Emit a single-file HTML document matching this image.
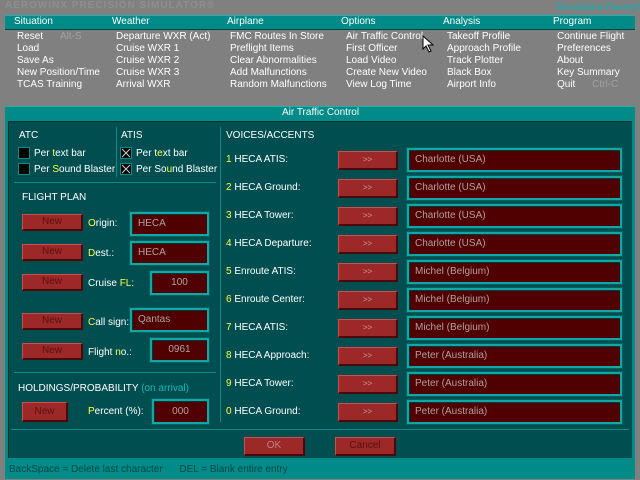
<!DOCTYPE html>
<html><head><style>
*{margin:0;padding:0;box-sizing:border-box}
body{width:640px;height:480px;background:#808080;position:relative;overflow:hidden;font-family:"Liberation Sans",sans-serif;font-size:10px;color:#fff}
.a{position:absolute;white-space:nowrap;line-height:12px}
.y{color:#ffff40}
.btn{position:absolute;background:#9c2828;border-top:1px solid #c85050;border-left:1px solid #c85050;border-bottom:2px solid #4a0808;border-right:2px solid #4a0808;color:#5a1010;text-align:center;font-size:10px}
.fld{position:absolute;background:#500000;border:2px solid #10a8a4;outline:1px solid #006060;box-shadow:inset 1px 1px 0 #003838;color:#b0a0a0;padding-left:6px;font-size:10px;height:24px;line-height:20px}
.chk{position:absolute;width:12px;height:12px;background:#000;border:1px solid #0a8a88}
.ln{position:absolute;background:#0a8a88}
.nb{width:61px;height:17px;line-height:14px}
.rb{left:338px;width:60px;height:19px;line-height:16px;color:#c0a0a0;font-size:8px}
.rf{left:407px;width:215px}
</style></head><body>
<div class="a" style="left:5px;top:0;color:#8e8e8e;font-weight:bold;letter-spacing:1px">AEROWINX PRECISION SIMULATOR®</div>
<div class="a" style="left:556px;top:2px;color:#10b0b0">Simulation Paused</div>
<div style="position:absolute;left:5px;top:15px;width:630px;height:15px;background:#008a88;border-top:1px solid #20b0b0;border-bottom:1px solid #004848"></div>
<div class="a" style="left:14px;top:16px">Situation</div>
<div class="a" style="left:112px;top:16px">Weather</div>
<div class="a" style="left:227px;top:16px">Airplane</div>
<div class="a" style="left:341px;top:16px">Options</div>
<div class="a" style="left:443px;top:16px">Analysis</div>
<div class="a" style="left:553px;top:16px">Program</div>
<div class="a" style="left:17px;top:31px">Reset <span style="color:#a0a0a0;margin-left:14px">Alt-S</span><br>Load<br>Save As<br>New Position/Time<br>TCAS Training</div>
<div class="a" style="left:116px;top:31px">Departure WXR (Act)<br>Cruise WXR 1<br>Cruise WXR 2<br>Cruise WXR 3<br>Arrival WXR</div>
<div class="a" style="left:230px;top:31px">FMC Routes In Store<br>Preflight Items<br>Clear Abnormalities<br>Add Malfunctions<br>Random Malfunctions</div>
<div class="a" style="left:346px;top:31px">Air Traffic Control<br>First Officer<br>Load Video<br>Create New Video<br>View Log Time</div>
<div class="a" style="left:447px;top:31px">Takeoff Profile<br>Approach Profile<br>Track Plotter<br>Black Box<br>Airport Info</div>
<div class="a" style="left:557px;top:31px">Continue Flight<br>Preferences<br>About<br>Key Summary<br>Quit <span style="color:#a0a0a0;margin-left:14px">Ctrl-C</span></div>
<svg style="position:absolute;left:422px;top:35px" width="14" height="18"><path d="M1 1 L1 14 L4 11 L7 17 L9 16 L6 10 L11 10 Z" fill="#fff" stroke="#000"/></svg>

<div style="position:absolute;left:5px;top:106px;width:630px;height:373px;background:#008a88;border-top:1px solid #20b0b0"></div>
<div class="a" style="left:282px;top:107px">Air Traffic Control</div>
<div style="position:absolute;left:8px;top:121px;width:624px;height:337px;background:#004e50;border-top:1px solid #003030;border-left:1px solid #003030"></div>
<div class="a" style="left:9px;top:464px;color:#004848">BackSpace = Delete last character &nbsp;&nbsp;&nbsp;&nbsp; DEL = Blank entire entry</div>

<div class="ln" style="left:116px;top:127px;width:1px;height:50px"></div>
<div class="ln" style="left:220px;top:127px;width:1px;height:295px"></div>
<div class="ln" style="left:14px;top:182px;width:202px;height:1px"></div>
<div class="ln" style="left:14px;top:372px;width:202px;height:1px"></div>
<div class="ln" style="left:11px;top:429px;height:1px;width:618px"></div>

<div class="a" style="left:19px;top:130px">ATC</div>
<div class="a" style="left:121px;top:130px">ATIS</div>
<div class="chk" style="left:18px;top:147px"></div>
<div class="chk" style="left:18px;top:163px"></div>
<div class="a" style="left:34px;top:148px">Per <span class="y">t</span>ext bar</div>
<div class="a" style="left:34px;top:164px">Per <span class="y">S</span>ound Blaster</div>
<svg style="position:absolute;left:120px;top:147px" width="12" height="12"><rect x="0.5" y="0.5" width="11" height="11" fill="#000" stroke="#0a8a88"/><path d="M2 2L10 10M10 2L2 10" stroke="#ccc"/></svg>
<svg style="position:absolute;left:120px;top:163px" width="12" height="12"><rect x="0.5" y="0.5" width="11" height="11" fill="#000" stroke="#0a8a88"/><path d="M2 2L10 10M10 2L2 10" stroke="#ccc"/></svg>
<div class="a" style="left:136px;top:148px">Per t<span class="y">e</span>xt bar</div>
<div class="a" style="left:136px;top:164px">Per So<span class="y">u</span>nd Blaster</div>

<div class="a" style="left:22px;top:192px">FLIGHT PLAN</div>
<div class="btn nb" style="left:22px;top:214px">New</div>
<div class="btn nb" style="left:22px;top:244px">New</div>
<div class="btn nb" style="left:22px;top:274px">New</div>
<div class="btn nb" style="left:22px;top:313px">New</div>
<div class="btn nb" style="left:22px;top:343px">New</div>
<div class="a" style="left:88px;top:218px"><span class="y">O</span>rigin:</div>
<div class="a" style="left:88px;top:248px"><span class="y">D</span>est.:</div>
<div class="a" style="left:88px;top:278px">Cruise <span class="y">FL</span>:</div>
<div class="a" style="left:88px;top:317px"><span class="y">C</span>all sign:</div>
<div class="a" style="left:88px;top:347px">Flight <span class="y">n</span>o.:</div>
<div class="fld" style="left:130px;top:212px;width:79px">HECA</div>
<div class="fld" style="left:130px;top:241px;width:79px">HECA</div>
<div class="fld" style="left:150px;top:271px;width:59px;text-align:center;padding:0">100</div>
<div class="fld" style="left:130px;top:308px;width:79px">Qantas</div>
<div class="fld" style="left:150px;top:338px;width:59px;text-align:center;padding:0">0961</div>

<div class="a" style="left:18px;top:383px">HOLDINGS/PROBABILITY <span style="color:#10b8b8">(on arrival)</span></div>
<div class="btn" style="left:22px;top:402px;width:46px;height:20px;line-height:17px">New</div>
<div class="a" style="left:88px;top:406px"><span class="y">P</span>ercent (%):</div>
<div class="fld" style="left:152px;top:399px;width:57px;height:25px;line-height:21px;text-align:center;padding:0">000</div>

<div class="a" style="left:226px;top:130px">VOICES/ACCENTS</div>

<div class="a" style="left:226px;top:154px"><span class="y">1</span> HECA ATIS:</div>
<div class="a" style="left:226px;top:182px"><span class="y">2</span> HECA Ground:</div>
<div class="a" style="left:226px;top:210px"><span class="y">3</span> HECA Tower:</div>
<div class="a" style="left:226px;top:238px"><span class="y">4</span> HECA Departure:</div>
<div class="a" style="left:226px;top:266px"><span class="y">5</span> Enroute ATIS:</div>
<div class="a" style="left:226px;top:294px"><span class="y">6</span> Enroute Center:</div>
<div class="a" style="left:226px;top:322px"><span class="y">7</span> HECA ATIS:</div>
<div class="a" style="left:226px;top:350px"><span class="y">8</span> HECA Approach:</div>
<div class="a" style="left:226px;top:378px"><span class="y">9</span> HECA Tower:</div>
<div class="a" style="left:226px;top:406px"><span class="y">0</span> HECA Ground:</div>

<div class="btn rb" style="top:151px">&gt;&gt;</div>
<div class="btn rb" style="top:179px">&gt;&gt;</div>
<div class="btn rb" style="top:207px">&gt;&gt;</div>
<div class="btn rb" style="top:235px">&gt;&gt;</div>
<div class="btn rb" style="top:263px">&gt;&gt;</div>
<div class="btn rb" style="top:291px">&gt;&gt;</div>
<div class="btn rb" style="top:319px">&gt;&gt;</div>
<div class="btn rb" style="top:347px">&gt;&gt;</div>
<div class="btn rb" style="top:375px">&gt;&gt;</div>
<div class="btn rb" style="top:403px">&gt;&gt;</div>

<div class="fld rf" style="top:148px">Charlotte (USA)</div>
<div class="fld rf" style="top:176px">Charlotte (USA)</div>
<div class="fld rf" style="top:204px">Charlotte (USA)</div>
<div class="fld rf" style="top:232px">Charlotte (USA)</div>
<div class="fld rf" style="top:260px">Michel (Belgium)</div>
<div class="fld rf" style="top:288px">Michel (Belgium)</div>
<div class="fld rf" style="top:316px">Michel (Belgium)</div>
<div class="fld rf" style="top:344px">Peter (Australia)</div>
<div class="fld rf" style="top:372px">Peter (Australia)</div>
<div class="fld rf" style="top:400px">Peter (Australia)</div>

<div class="btn" style="left:244px;top:437px;width:61px;height:19px;line-height:16px;color:#c08080">OK</div>
<div class="btn" style="left:335px;top:437px;width:61px;height:19px;line-height:16px;color:#5a1010">Cancel</div>
</body></html>
